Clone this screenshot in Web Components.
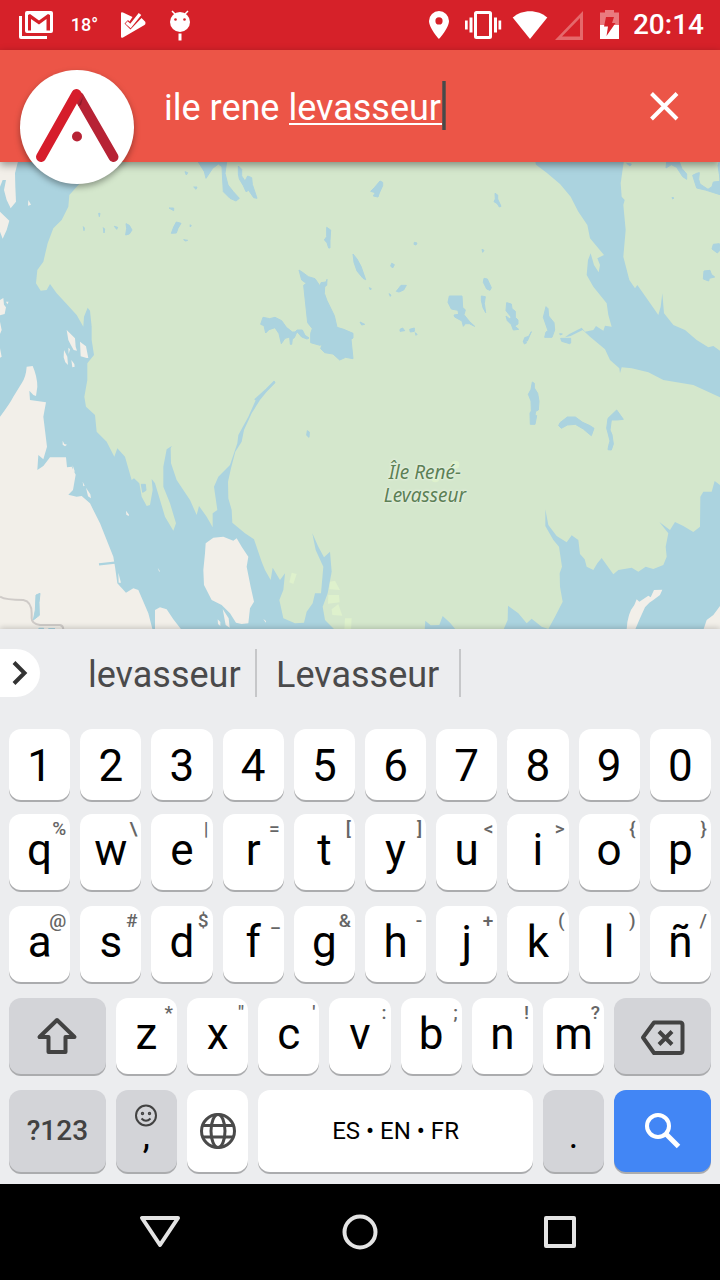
<!DOCTYPE html>
<html lang="fr">
<head>
<meta charset="utf-8">
<meta name="viewport" content="width=device-width, initial-scale=1">
<title>ile rene levasseur</title>
<style>
  html, body { margin: 0; }
  body { font-family: Roboto, "Noto Sans", sans-serif; background: #000; }
</style>
</head>
<body>
<map-screen></map-screen>

<template id="map-screen">
  <style>
    :host { display: flex; flex-direction: column; min-height: 100vh; }
    search-bar { position: relative; z-index: 2; }
    map-view { flex: 1; }
    soft-keyboard { position: relative; z-index: 1; }
  </style>
  <status-bar></status-bar>
  <search-bar></search-bar>
  <map-view></map-view>
  <soft-keyboard></soft-keyboard>
  <nav-bar></nav-bar>
</template>

<template id="status-bar">
  <style>
    :host { display: flex; justify-content: space-between; align-items: center; height: 50px; padding: 0 16px 0 19px; background: #d62129; color: #fff; }
    div { display: flex; align-items: center; }
    svg { display: block; height: 50px; fill: #fff; }
    .notes { gap: 16px; }
    .temp { width: 31px; text-align: center; font-size: 18px; line-height: 24px; font-weight: 500; }
    time { font-size: 28px; line-height: 32px; font-weight: 500; }
  </style>
  <div class="notes">
    <svg width="34" viewBox="19 0 34 50" aria-hidden="true"><path d="M19 16h3v20h25v3H21q-2 0-2-2z"/><path fill-rule="evenodd" d="M27 11h24q2 0 2 2v18q0 2-2 2H27q-2 0-2-2V13q0-2 2-2zm1 4v15.500h3V19l8 5.500 7.500-5.500v11.500H50V15l-2-1-9 6.500-9-6.500z"/></svg>
    <span class="temp">18°</span>
    <svg width="34" viewBox="116 0 34 50" aria-hidden="true"><path d="M121 13.500q0-2 2-1l9.500 4.500-3 4.500-1.500-1.500-3.500 3.500 6 6 11-11.500 3 3q1 .7 1 2t-1 2L123 37.500q-2 1-2-1z"/><path d="M126.500 22.500l4 3.500 9.500-12" fill="none" stroke="#fff" stroke-width="3.200"/></svg>
    <svg width="28" viewBox="166 0 28 50" aria-hidden="true"><circle cx="180" cy="22" r="10"/><path d="M172 11l5 5M188 11l-5 5" stroke="#fff" stroke-width="1.500"/><circle cx="175.500" cy="19.500" r="1.300" fill="#d62129"/><circle cx="184.500" cy="19.500" r="1.300" fill="#d62129"/><path d="M178.500 33.500h3v7h-3z"/></svg>
  </div>
  <div>
    <svg width="44" viewBox="417 0 44 50" aria-hidden="true"><path fill-rule="evenodd" d="M439 11a10 10 0 0 0-10 10c0 7 10 18 10 18s10-11 10-18a10 10 0 0 0-10-10zm0 6.300a3.600 3.600 0 1 1 0 7.200 3.600 3.600 0 0 1 0-7.200z"/></svg>
    <svg width="44" viewBox="461 0 44 50" aria-hidden="true"><path d="M465 20.500h2.700v9H465zM469.500 17.500h3v15h-3zM494 17.500h3v15h-3zM498.500 20.500h2.700v9h-2.700z"/><rect x="475.500" y="12.500" width="15" height="25" rx="1" fill="none" stroke="#fff" stroke-width="3"/></svg>
    <svg width="50" viewBox="505 0 50 50" aria-hidden="true"><path d="M530 39L512.700 17.500c9-8.500 25.500-8.500 34.600 0z"/></svg>
    <svg width="28" viewBox="555 0 28 50" aria-hidden="true"><path fill-rule="evenodd" fill="#e5686b" d="M583 11v29h-28zm-3 7l-18 18.500h18z"/></svg>
    <svg width="50" viewBox="583 0 50 50" aria-hidden="true"><path fill="#ea7a7e" d="M605 10h9v2.500h5V25h-19V12.500h5z"/><path d="M600 25h19v14h-19z"/><path fill="#d62129" d="M606 17h8l-2 6h3.500l-9 13 1.500-9.500h-4z"/></svg>
    <time>20:14</time>
  </div>
</template>

<template id="search-bar">
  <style>
    :host { display: flex; align-items: center; height: 112px; padding: 0 20px; box-sizing: border-box; background: #ec5547; box-shadow: 0 3px 8px rgba(0,0,0,.4); }
    .logo { align-self: flex-start; width: 114px; height: 114px; margin: 20px 28px 0 0; padding: 0; border: 0; border-radius: 50%; background: #fff; box-shadow: 0 3px 6px rgba(0,0,0,.35); flex: none; }
    .logo svg, .clear svg { display: block; width: 100%; height: 100%; }
    input { flex: 1; min-width: 0; height: 50px; box-sizing: border-box; border: 0; outline: 0; margin: 0; padding: 4px 2px 0; font: 36px/44px Roboto, sans-serif; color: #fff; border-radius: 0;
      background: linear-gradient(90deg, #8a5048, #43494a 40%, #43494a 60%, #8a5048) 280px 0 / 4px 49px no-repeat, linear-gradient(#fff, #fff) 127px 42px / 154px 2px no-repeat; }
    .clear { flex: none; width: 72px; height: 72px; padding: 0; border: 0; background: none; }
  </style>
  <button class="logo" aria-label="Menu"><svg viewBox="20 70 114 114">
    <path d="M79 97L113.500 157" stroke="#b72335" stroke-width="10" stroke-linecap="round"/>
    <path d="M78 106l5-9-2 8z" fill="#8f1a2a"/>
    <path d="M76.500 94L41 157" stroke="#d61d2b" stroke-width="10" stroke-linecap="round"/>
    <circle cx="77" cy="136.500" r="5" fill="#b72335"/>
  </svg></button>
  <input type="text" aria-label="Recherche" value="ile rene levasseur" spellcheck="false" autocomplete="off">
  <button class="clear" aria-label="Effacer"><svg viewBox="628 70 72 72"><path d="M651.500 93.500l25.500 25.500M677 93.500L651.500 119" fill="none" stroke="#fff" stroke-width="4"/></svg></button>
</template>

<template id="map-view">
  <style>
    :host { position: relative; display: flex; min-height: 240px; overflow: hidden; background: #abd3df; }
    svg { flex: 1; width: 100%; min-width: 0; display: block; }
    .g { fill: #d4e7cc; } .l { fill: #f2efe9; } .w { fill: #abd3df; } .f { fill: #def1cc; }
    p { position: absolute; left: 59%; top: 69%; transform: translate(-50%, -50%); width: 100px; margin: 0; text-align: center; font: italic 19px/23px "Noto Sans", "Open Sans", sans-serif; color: #5c8055; text-shadow: 0 0 2px #eef5ea, 0 0 3px #eef5ea; }
  </style>
  <svg viewBox="0 486 2160 1401" preserveAspectRatio="xMidYMid slice" role="img" aria-label="Carte de l'île René-Levasseur">
    <path class="g" d="M300 480H1605L1608 494 1640 518 1680 552 1712 590 1735 635 1762 675 1770 715 1795 745 1812 765 1792 775 1800 795 1796 817 1782 795 1772 760 1764 780 1760 825 1780 860 1820 910 1825 945 1835 980 1815 977 1810 992 1788 978 1780 990 1755 995 1745 983 1708 1002 1695 1012 1712 1008 1748 990 1770 1010 1815 1048 1830 1080 1858 1105 1860 1120 1865 1102 1895 1105 1945 1117 1990 1140 2080 1155 2160 1192V1455L2144 1443 2135 1475 2110 1475 2101 1490 2100 1580 2080 1596 2050 1578 2025 1566 2010 1590 1978 1566 2005 1600 1997 1640 2000 1670 1990 1695 1960 1707 1937 1700 1915 1715 1895 1703 1855 1710 1840 1723 1805 1674 1792 1690 1780 1710 1760 1700 1754 1678 1740 1662 1735 1620 1715 1606 1700 1627 1670 1608 1645 1575 1636 1528 1636 1578 1660 1620 1677 1640 1686 1700 1679 1720 1680 1760 1688 1805 1665 1850 1645 1887 1625 1880 1595 1856 1580 1870 1555 1840 1524 1817 1523 1860 1510 1890H1368L1350 1868 1328 1848 1318 1875 1292 1876 1276 1862 1274 1890H1005L975 1860 968 1820 983 1780 995 1715 990 1655 972 1672 955 1640 937 1600 947 1650 970 1700 963 1780 945 1780 938 1810 920 1835 912 1868 885 1870 850 1855 838 1800 850 1770 855 1720 840 1740 818 1703 812 1740 795 1710 785 1685 762 1618 735 1600 697 1568 695 1530 685 1495 684 1445 693 1405 706 1355 725 1325 732 1290 755 1240 780 1200 800 1175 826 1148 823 1142 795 1172 766 1203 745 1250 715 1305 712 1330 690 1395 655 1430 642 1460 652 1530 638 1540 638 1582 620 1550 597 1518 590 1545 570 1500 530 1440 513 1390 512 1345 515 1338 500 1348 490 1400 490 1460 510 1510 528 1570 520 1592 495 1550 480 1500 465 1450 455 1437 458 1470 450 1515 440 1518 425 1490 418 1450 402 1435 395 1440 375 1370 352 1345 343 1370 320 1325 290 1295 285 1245 258 1220 253 1190 262 1140 262 1090 282 1065 275 1020 275 980 270 932 263 923 252 950 250 980 230 945 200 912 170 880 150 852 140 870 122 872 108 850 112 810 130 785 143 730 160 685 185 660 205 620 208 585 240 550z"/>
    <path class="g" d="M1872 480L1862 550 1865 590 1874 600 1870 615 1877 690 1870 770 1888 840 1905 865 1912 855 1940 895 1975 945 1982 920 1987 880 1992 940 2020 975 2055 990 2090 1020 2125 1042 2140 1038 2160 1052V480z"/>
    <path class="w" d="M1640 480h75v15l-10 3-5-6-15 8-7-12h-38z"/>
    <path class="l" d="M0 480H55L45 520 46 560 48 605 32 625 20 600 12 570 18 540 8 540 0 560zM0 635L28 662 20 690 8 716 0 695zM0 900l10-6 2 20 6 8-4 20-14 4zM18 905l8 0-4 8zM0 965l5 25-5 12zM0 1045l5 25-5 3zM200 990l25 25 2 25 4 12-10-2-8-14-8-16zM240 1025l18 14 5 25 2 10-5 0-18-5zM192 1050l10 20 2 25-8-8-5-15zM205 1043l5 5-4 14zM214 1080l9 12 1 8-7 2zM85 600l8 14-9 3z"/>
    <path class="l" d="M0 1250Q30 1210 40 1190L65 1150Q78 1130 80 1100L98 1098Q112 1130 112 1160L108 1188 100 1185 88 1172 90 1200 138 1207 130 1250 141 1340 130 1378 115 1365 112 1410 130 1398 150 1372 198 1372 201 1402 215 1400 227 1424 219 1470 205 1484 230 1490 245 1488 270 1510 300 1570 340 1670 345 1700 352 1750 378 1778 400 1765 415 1770 445 1840 458 1890H0z"/>
    <path class="l" d="M465 1890V1830L480 1822 500 1828 520 1858 545 1890zM617 1630L640 1613 670 1610 700 1622 710 1615 725 1640 745 1670 740 1700 752 1760 762 1805 750 1825 745 1870 725 1872 708 1868 690 1840 665 1815 635 1800 612 1755 610 1710 615 1660zM668 1827l18 28 3 28-12-8zM653 1858l8 8 0 12-7-6zM355 1718l8 30-7 0zM258 1463l13 20 2 12-9-6zM188 1322l5 10 8 2-6 5-7-5zM378 1532l9 12-1 4-7-4zM473 1703l6 9-1 5zM248 1445l6 12-4 2zM218 1396l7 20-6-4zM790 1857l8 6-1 5z"/>
    <path class="l" d="M1880 1890Q1882 1840 1903 1815L1910 1798 1918 1805 1945 1787 1952 1792 1962 1770 1987 1769 1980 1785 1960 1800 1948 1808 1935 1822 1920 1855 1905 1890zM2110 1890L2120 1860 2140 1845 2160 1818V1890z"/>
    <g class="w" stroke="#abd3df" stroke-width="3" stroke-linejoin="round">
      <path d="M595 486H680L675 520 684 555 700 575 718 595 708 603 690 595 670 575 668 540 666 500 655 492 638 505 618 535 613 515zM715 498l10 10 0 20 10 15 8-15 12 5 2 20 14 42-10-2-15-22-8 4-8-18-12-20-3-15zM555 515l8 3-4 7zM581 561l10 0-3 7zM507 624l14 0 0 8zM296 640l4 0-2 10zM250 680l3 4-1 8zM310 683l4 4-2 12zM343 679l10 3-3 6zM378 671l10 5 8 14-8 12-11 3 3-20zM529 666l14 4-9 15-5 14-15 1 7-19zM551 719l12 2-6 2zM571 674l3 4-4 2z"/>
      <path d="M980 682l12 8-2 32 0 22-4 0-5-16-8-8 7-10zM1059 762l12 15 12 22 14 40-8-4-18-22-9-26zM897 810l12 8 16 12 20 6 15 22 3-10 15-2 3-8-1 18-6 4-1 20 8 22 22 45 8 35 20 6 28 12 0 14-6 4 6 58-22-4-18 8-20-18-25-4-12-12 4-12 18-12-24 14-28-8 0-28 5-14-14-18-12-112 8-6-14-10z"/>
      <path d="M789 952l20 4 16-4 20 10 14 20 18 14 8 0 6-6 16 0 8 16 12 8-6 3-16-6-14-16-8 18-6 4-2 16-4 0-2-22-14 4-11 16-7-30-12-18-18 6-10 10-5-22-10-4zM922 1292l6 4-1 16-7-6z"/>
      <path d="M1140 543l8 4 0 10-10 22-4 12-14-3 6-10-14-4 12-12zM1485 580l8 5 0 12 10 22-5 2-6-10-10-6 4-8zM1243 727l8 2-3 6-6-2zM1175 790l8 4-5 10-6-6zM1203 856l16 0-8 14-14 6-8-2zM1446 748l6 3-4 6zM1108 863l6 3-3 4zM1167 881l6 4-2 4zM1080 966l14 7-9 2zM1200 988l8-4 6 8-14 2zM1229 988l14-4 0 10-12 2zM1246 998l5 5-3 3z"/>
      <path d="M1348 888l38 0 2 34 8 8-4 14 16 20 16 15-16-8-12 0-6 8-4-16-22-12-2-6 14-2-2-12-20-4-10-20zM1452 835l10 2 12 26-4 8-10-4-10-20zM1444 888l12 2-3 20 4 28-8-15-5-22zM1520 908l14 4 2 14 10 8 0 18 8 8 0 12-10 6 12 10-16 2-6-16-12-12-4-14 10 8 6-4-16-20zM1638 920l6 6 2 22 16 20 2 22-8 22-22 0 4-16 6-4-14-40zM1594 995l-8 14-12 4-4 12 12-2zM1570 1024l10 4-7 4zM1682 1015l30 0 0 14-3 2-24-7zM1679 1001l8 1-6 3z"/>
      <path d="M1597 1146l6 4 0 14 10 16 4 24-2 26-8 4-2 10 5 3-5 26-14 0-1-34 4-6-1-30-8-20 8-15zM1680 1268l22-17 24 0 22 16 22 10 12 8-8 22-10-8-14-12-24-14-24 2-18 10-8-8zM1850 1230l20 28-20 2-16 0-4 30 6 14 4 28-6 18-10-1 2-12 4-14-6-24-4-14 4-30z"/>
      <path d="M2000 486h38l8 20 14 16 0 16-12-8-18-28-16-8-16 10zM2158 486l-4 10 6 40v48l-44-14-26-6-12-38 12-6 8-2-2 20 4 14 24 16 12-8 4-14 20-2zM2140 733l18-2 2 20-8 8-16-12zM2112 813l18-2 4 12 10 8-16 4-2 8-16-6zM2016 592l6 2-4 3zM1880 490l14 2-4 6z"/>
      <path d="M424 1453l12 0 2 18-10 6zM108 1785l12-5-3 28 1 38-18 14 6-30z"/>
    </g>
    <path d="M297 1693L345 1688M765 1200L800 1169 824 1145" fill="none" stroke="#abd3df" stroke-width="7"/>
    <path class="w" d="M112 1890l5-7 14 0 3 7zM145 1884h20v6h-20z"/>
    <path d="M0 1790Q15 1800 70 1800 95 1805 95 1840V1855Q95 1872 120 1875H180Q190 1877 190 1890" fill="none" stroke="#cfcbc8" stroke-width="6"/>
    <path class="f" d="M875 1718l15 4-10 30-12-5zM990 1745l15-3 15 28-32-2zM985 1785h32l2 22-35 4zM995 1828l20-16 12 35-30-2zM1035 1855l20 0-2 35h-20z"/>
    <circle class="f" cx="1306" cy="1435" r="12"/><circle class="f" cx="1366" cy="1394" r="12"/>
  </svg>
  <p>Île René-Levasseur</p>
</template>

<template id="key-cap">
  <style>
    :host { --face: #fff; display: flex; flex: none; width: 10%; box-sizing: border-box; padding: 0 5px; }
    :host([kind="side"]) { width: 15%; }
    :host([kind="space"]) { width: 40%; }
    :host([tone="grey"]) { --face: #d3d4d8; }
    :host([tone="blue"]) { --face: #4286f5; }
    button { position: relative; flex: 1; min-width: 0; display: flex; flex-direction: column; align-items: center; justify-content: center; margin: 0; padding: 0 0 4px; border: 0; border-radius: 12px; background: var(--face); color: #000; box-shadow: 0 2px 0 #abacae; font: 44px/52px Roboto, sans-serif; }
    :host([kind="digit"]) button { padding: 2px 0 0; }
    :host([kind="side"]) button { font-size: 28px; line-height: 32px; font-weight: 500; color: #424242; padding: 0; }
    :host([kind="space"]) button { font-size: 24px; line-height: 28px; padding: 0; }
    :host([kind="icon"]) button { padding: 0; }
    :host([kind="mark"]) button { font-size: 36px; line-height: 18px; padding: 0 0 27px; justify-content: flex-end; }
    .hint { position: absolute; top: 5px; right: 4px; font-size: 19px; line-height: 20px; font-weight: 500; color: #666; }
    ::slotted(svg) { display: block; }
  </style>
  <button type="button"><slot></slot></button>
</template>

<template id="soft-keyboard">
  <style>
    :host { display: block; background: #ecedef; padding-bottom: 12px; box-shadow: 0 -1px 6px rgba(0,0,0,.2); }
    .strip { display: flex; align-items: center; height: 88px; padding-bottom: 12px; }
    .more { width: 40px; height: 48px; padding: 0; border: 0; border-radius: 0 24px 24px 0; background: #fff; margin-right: 34px; }
    .more svg { display: block; }
    .word { border: 0; border-right: 2px solid #c6c7c9; background: none; height: 48px; min-width: 182px; padding: 3px 14px 0; font: 36px/44px Roboto, sans-serif; color: #4a4a4b; }
    .word + .word { min-width: 204px; }
    .row { display: flex; height: 76px; padding: 0 4px; margin-bottom: 16px; }
    .row.digits { height: 71px; margin-bottom: 14px; }
    .row.last { height: 82px; margin-bottom: 0; }
    svg { fill: none; stroke: #424242; stroke-width: 4; stroke-linejoin: round; display: block; }
  </style>
  <div class="strip">
    <button class="more" aria-label="Plus"><svg width="40" height="48" viewBox="0 649 40 48"><path d="M14 662.500l10.500 10.500L14 683.500" stroke="#333" style="stroke-linejoin:miter"/></svg></button>
    <button class="word">levasseur</button><button class="word">Levasseur</button>
  </div>
  <div class="row digits" data-kind="digit" data-keys="1 2 3 4 5 6 7 8 9 0"></div>
  <div class="row" data-keys="q% w\ e| r= t[ y] u&lt; i&gt; o{ p}"></div>
  <div class="row" data-keys="a@ s# d$ f_ g&amp; h- j+ k( l) ñ/"></div>
  <div class="row" data-keys="z* x&quot; c' v: b; n! m?">
    <key-cap kind="side" tone="grey" label="Majuscule"><svg width="44" height="44" viewBox="35 1014 44 44"><path d="M57 1020L39.500 1037H48.500V1052H65.500V1037H74.500z"/></svg></key-cap>
    <key-cap class="end" kind="side" tone="grey" label="Supprimer"><svg width="48" height="44" viewBox="638 1014 48 44"><path d="M653 1022.500H679Q681.500 1022.500 681.500 1025V1050.500Q681.500 1053 679 1053H653L642 1037.500z"/><path d="M658 1031.500l13 13M671 1031.500l-13 13"/></svg></key-cap>
  </div>
  <div class="row last">
    <key-cap kind="side" tone="grey">?123</key-cap>
    <key-cap kind="mark" tone="grey"><svg width="24" height="24" viewBox="133 1102 24 24" style="stroke-width:2"><circle cx="145" cy="1114.500" r="10"/><path d="M140.500 1117.500q4.500 4.500 9 0"/><circle cx="141.500" cy="1112.500" r=".7"/><circle cx="148.500" cy="1112.500" r=".7"/></svg>,</key-cap>
    <key-cap kind="icon" label="Langue"><svg width="40" height="40" viewBox="196 1111 40 40" style="stroke-width:3;stroke:#4a4a4a"><circle cx="216" cy="1131" r="16.500"/><ellipse cx="216" cy="1131" rx="7" ry="16.500"/><path d="M201 1125.500h30M201 1137h30"/></svg></key-cap>
    <key-cap kind="space">ES • EN • FR</key-cap>
    <key-cap kind="mark" tone="grey">.</key-cap>
    <key-cap kind="side" tone="blue" label="Rechercher"><svg width="40" height="40" viewBox="642 1111 40 40" style="stroke:#fff"><circle cx="657" cy="1126" r="11"/><path d="M665.500 1134.500l12 12" style="stroke-width:5"/></svg></key-cap>
  </div>
</template>

<template id="nav-bar">
  <style>
    :host { display: grid; grid-template-columns: repeat(3, 1fr); height: 96px; padding: 0 60px; background: #000; }
    button { display: flex; align-items: center; justify-content: center; padding: 0; border: 0; background: none; }
    svg { fill: none; stroke: #e4e4e4; stroke-width: 4; stroke-linejoin: round; }
  </style>
  <button aria-label="Retour"><svg width="48" height="48" viewBox="0 0 48 48"><path d="M6 10H42L24 37z"/></svg></button>
  <button aria-label="Accueil"><svg width="48" height="48" viewBox="0 0 48 48"><circle cx="24" cy="24" r="15.500"/></svg></button>
  <button aria-label="Applications"><svg width="48" height="48" viewBox="0 0 48 48"><rect x="10" y="10" width="28" height="28"/></svg></button>
</template>

<script>
  class Templated extends HTMLElement {
    constructor() {
      super();
      this.attachShadow({ mode: "open" }).append(document.getElementById(this.localName).content.cloneNode(true));
    }
  }
  class MapScreen extends Templated {}
  class StatusBar extends Templated {}
  class SearchBar extends Templated {}
  class MapView extends Templated {}
  class NavBar extends Templated {}

  class KeyCap extends Templated {
    connectedCallback() {
      const button = this.shadowRoot.querySelector("button");
      if (this.hasAttribute("label")) button.setAttribute("aria-label", this.getAttribute("label"));
      if (this.hasAttribute("hint") && !this.shadowRoot.querySelector(".hint")) {
        const hint = document.createElement("span");
        hint.className = "hint";
        hint.textContent = this.getAttribute("hint");
        button.append(hint);
      }
    }
  }

  class SoftKeyboard extends Templated {
    constructor() {
      super();
      for (const row of this.shadowRoot.querySelectorAll("[data-keys]")) {
        const end = row.querySelector(".end");
        for (const pair of row.dataset.keys.split(" ")) {
          const key = document.createElement("key-cap");
          key.textContent = pair[0];
          if (pair[1]) key.setAttribute("hint", pair[1]);
          if (row.dataset.kind) key.setAttribute("kind", row.dataset.kind);
          row.insertBefore(key, end);
        }
      }
    }
  }

  customElements.define("key-cap", KeyCap);
  customElements.define("status-bar", StatusBar);
  customElements.define("search-bar", SearchBar);
  customElements.define("map-view", MapView);
  customElements.define("soft-keyboard", SoftKeyboard);
  customElements.define("nav-bar", NavBar);
  customElements.define("map-screen", MapScreen);
</script>
</body>
</html>
